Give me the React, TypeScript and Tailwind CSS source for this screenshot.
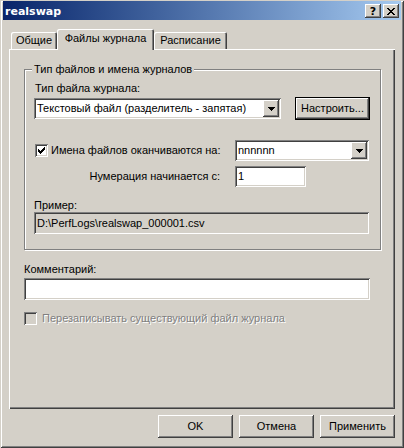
import type { ReactNode } from 'react'

const raised =
  'shadow-[inset_-1px_-1px_#404040,inset_1px_1px_#fff,inset_-2px_-2px_#808080,inset_2px_2px_#d4d0c8]'
const sunken =
  'shadow-[inset_1px_1px_#808080,inset_-1px_-1px_#fff,inset_2px_2px_#404040,inset_-2px_-2px_#d4d0c8]'

// pixel rows of the classic check mark, [y, x0, x1]
const checkRows: [number, number, number][] = [
  [3, 9, 9],
  [4, 8, 9],
  [5, 3, 3],
  [5, 7, 9],
  [6, 3, 4],
  [6, 6, 8],
  [7, 3, 7],
  [8, 4, 6],
  [9, 5, 5],
]

const closeRows: [number, number, number][] = [
  [0, 0, 1],
  [0, 6, 7],
  [1, 1, 2],
  [1, 5, 6],
  [2, 2, 5],
  [3, 3, 4],
  [4, 2, 5],
  [5, 1, 2],
  [5, 5, 6],
  [6, 0, 1],
  [6, 6, 7],
]

function Pixels({ rows, w, h, color = '#000' }: { rows: [number, number, number][]; w: number; h: number; color?: string }) {
  return (
    <svg width={w} height={h} viewBox={`0 0 ${w} ${h}`} shapeRendering="crispEdges">
      {rows.map(([y, x0, x1], i) => (
        <rect key={i} x={x0} y={y} width={x1 - x0 + 1} height={1} fill={color} />
      ))}
    </svg>
  )
}

function DropArrow() {
  return (
    <svg width={7} height={4} viewBox="0 0 7 4" shapeRendering="crispEdges">
      <path d="M0 0h7v1h-1v1h-1v1h-1v1h-1v-1h-1v-1h-1v-1h-1z" fill="#000" />
    </svg>
  )
}

function Checkbox({ checked, disabled }: { checked?: boolean; disabled?: boolean }) {
  return (
    <div className={`h-[13px] w-[13px] shrink-0 ${disabled ? 'bg-[#d4d0c8]' : 'bg-white'} ${sunken}`}>
      {checked ? <Pixels rows={checkRows} w={13} h={13} /> : null}
    </div>
  )
}

function Combo({ value, className }: { value: string; className: string }) {
  return (
    <div className={`flex h-[21px] items-center bg-white ${sunken} ${className}`}>
      <span className="flex-1 truncate pl-[3px] leading-[13px]">{value}</span>
      <div className={`mr-[2px] flex h-[17px] w-[16px] items-center justify-center bg-[#d4d0c8] ${raised}`}>
        <DropArrow />
      </div>
    </div>
  )
}

function Button({ children, isDefault }: { children: ReactNode; isDefault?: boolean }) {
  return (
    <div
      className={`flex h-[23px] w-[75px] items-center justify-center bg-[#d4d0c8] leading-[13px] ${
        isDefault
          ? 'shadow-[inset_0_0_0_1px_#000,inset_-2px_-2px_#404040,inset_2px_2px_#fff,inset_-3px_-3px_#808080]'
          : raised
      }`}
    >
      {children}
    </div>
  )
}

function Tab({ label, width, selected }: { label: string; width: string; selected?: boolean }) {
  return (
    <div
      className={`flex justify-center rounded-t-[2px] bg-[#d4d0c8] leading-[13px] shadow-[inset_1px_1px_#fff,inset_-1px_0_#404040,inset_-2px_0_#808080] ${width} ${
        selected ? 'relative z-10 -mb-px h-[21px] pt-[3px]' : 'h-[17px] pt-[2px]'
      }`}
    >
      {label}
    </div>
  )
}

export default function App() {
  return (
    <div className="flex h-[448px] w-[404px] flex-col bg-[#d4d0c8] font-['Liberation_Sans',Arial,sans-serif] text-[11px] text-black shadow-[inset_1px_1px_#d4d0c8,inset_-1px_-1px_#404040,inset_2px_2px_#fff,inset_-2px_-2px_#808080]">
      <header className="mx-[3px] mt-px flex h-[19px] items-start bg-linear-to-r from-[#0a246a] to-[#a6caf0]">
        <span className="mt-[4px] flex-1 pl-[2px] font-['DejaVu_Sans',sans-serif] text-[11px] leading-[13px] font-bold text-white">
          realswap
        </span>
        <div className={`mt-[3px] flex h-[14px] w-[16px] items-center justify-center bg-[#d4d0c8] ${raised}`}>
          <span className="font-['DejaVu_Sans',sans-serif] text-[11px] leading-[11px] font-bold">?</span>
        </div>
        <div className={`mt-[3px] mr-[2px] ml-[2px] flex h-[14px] w-[16px] items-center justify-center bg-[#d4d0c8] ${raised}`}>
          <Pixels rows={closeRows} w={8} h={7} />
        </div>
      </header>

      <div className="mt-[9px] ml-[9px] w-[386px]">
        <div className="flex items-end pl-[2px]">
          <Tab label="Общие" width="w-[46px]" />
          <Tab label="Файлы журнала" width="w-[97px]" selected />
          <Tab label="Расписание" width="w-[73px]" />
        </div>

        <div className="h-[360px] pt-[20px] pl-[15px] shadow-[inset_1px_1px_#fff,inset_-1px_-1px_#404040,inset_-2px_-2px_#808080]">
          <div className="relative h-[181px] w-[357px] border border-[#808080] pt-[12px] pl-[9px] shadow-[inset_1px_1px_#fff,1px_1px_#fff]">
            <span className="absolute -top-[7px] left-[7px] bg-[#d4d0c8] px-[2px] leading-[13px]">
              Тип файлов и имена журналов
            </span>

            <div className="pl-px leading-[13px]">Тип файла журнала:</div>

            <div className="mt-[2px] flex items-start">
              <Combo value="Текстовый файл (разделитель - запятая)" className="mt-px w-[247px]" />
              <div className="ml-[14px]">
                <Button isDefault>Настроить...</Button>
              </div>
            </div>

            <div className="mt-[20px] flex items-center">
              <div className="flex w-[201px] items-center gap-[3px] pl-px">
                <Checkbox checked />
                <span className="leading-[13px]">Имена файлов оканчиваются на:</span>
              </div>
              <Combo value="nnnnnn" className="w-[134px]" />
            </div>

            <div className="mt-[5px] flex items-center">
              <div className="w-[201px] pr-[15px] text-right leading-[13px]">Нумерация начинается с:</div>
              <div className={`flex h-[21px] w-[71px] items-center bg-white pl-[3px] leading-[13px] ${sunken}`}>1</div>
            </div>

            <div className="mt-[12px] leading-[13px]">Пример:</div>
            <div className={`flex h-[22px] w-[335px] items-center bg-[#d4d0c8] pl-[3px] leading-[13px] ${sunken}`}>
              D:\PerfLogs\realswap_000001.csv
            </div>
          </div>

          <div className="mt-[13px] leading-[13px]">Комментарий:</div>
          <div className={`mt-[2px] h-[22px] w-[346px] bg-white ${sunken}`} />

          <div className="mt-[12px] flex items-center gap-[5px]">
            <Checkbox disabled />
            <span className="leading-[13px] text-[#808080] [text-shadow:1px_1px_0_#fff]">
              Перезаписывать существующий файл журнала
            </span>
          </div>
        </div>
      </div>

      <div className="mt-[6px] flex justify-end gap-[6px] pr-[9px]">
        <Button>OK</Button>
        <Button>Отмена</Button>
        <Button>Применить</Button>
      </div>
    </div>
  )
}
